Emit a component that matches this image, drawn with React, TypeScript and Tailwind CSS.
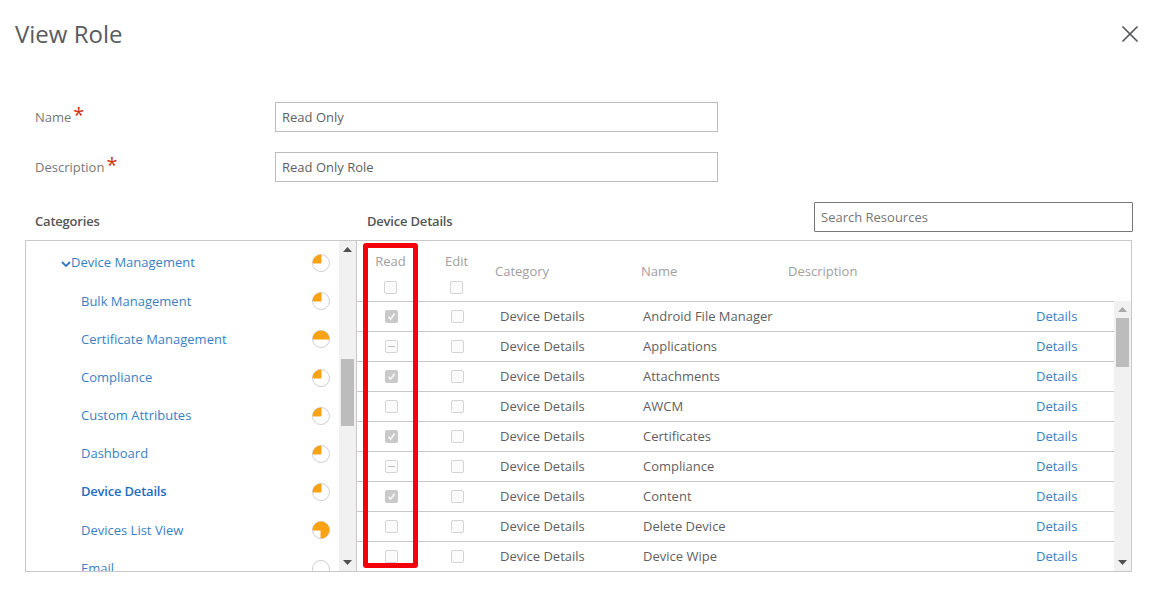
import { X } from "lucide-react";

const font = "font-['Open_Sans','Noto_Sans',sans-serif]";

type Share = "quarter" | "half" | "three" | "none";

const categories: { label: string; share: Share; bold?: boolean; parent?: boolean }[] = [
  { label: "Device Management", share: "quarter", parent: true },
  { label: "Bulk Management", share: "quarter" },
  { label: "Certificate Management", share: "half" },
  { label: "Compliance", share: "quarter" },
  { label: "Custom Attributes", share: "quarter" },
  { label: "Dashboard", share: "quarter" },
  { label: "Device Details", share: "quarter", bold: true },
  { label: "Devices List View", share: "three" },
  { label: "Email", share: "none" },
];

type Mark = "checked" | "mixed" | "empty";

const resources: { name: string; read: Mark }[] = [
  { name: "Android File Manager", read: "checked" },
  { name: "Applications", read: "mixed" },
  { name: "Attachments", read: "checked" },
  { name: "AWCM", read: "empty" },
  { name: "Certificates", read: "checked" },
  { name: "Compliance", read: "mixed" },
  { name: "Content", read: "checked" },
  { name: "Delete Device", read: "empty" },
  { name: "Device Wipe", read: "empty" },
];

const wedges: Record<Share, string> = {
  quarter: "M9 9V1A8 8 0 0 0 1 9Z",
  half: "M1 9A8 8 0 0 1 17 9Z",
  three: "M9 9H1A8 8 0 1 1 9 17Z",
  none: "",
};

function Pie({ share }: { share: Share }) {
  return (
    <svg width="18" height="18" viewBox="0 0 18 18" className="shrink-0">
      <circle cx="9" cy="9" r="8.5" fill="#fff" stroke="#cfcfcf" />
      {wedges[share] && <path d={wedges[share]} fill="#f9a213" stroke="#f9a213" strokeWidth="1" />}
    </svg>
  );
}

function Box({ mark = "empty" }: { mark?: Mark }) {
  if (mark === "checked") {
    return (
      <span className="flex h-[13px] w-[13px] items-center justify-center rounded-[2px] bg-[#c9c9c9]">
        <svg width="9" height="9" viewBox="0 0 9 9">
          <path d="M1.5 4.8 3.6 7 7.6 1.8" fill="none" stroke="#f4f4f4" strokeWidth="1.8" />
        </svg>
      </span>
    );
  }
  return (
    <span className="flex h-[13px] w-[13px] items-center justify-center rounded-[2px] border border-[#d4d4d4] bg-[#fbfbfb]">
      {mark === "mixed" && <span className="h-px w-[7px] bg-[#bdbdbd]" />}
    </span>
  );
}

function Arrow({ up, color }: { up?: boolean; color: string }) {
  return (
    <svg width="9" height="5" viewBox="0 0 9 5">
      <path d={up ? "M4.5 0 9 5H0Z" : "M0 0H9L4.5 5Z"} fill={color} />
    </svg>
  );
}

function Field({ label, value }: { label: string; value: string }) {
  return (
    <div className="flex h-[30px] items-center">
      <div className="flex w-[240px] items-center pt-px text-[13px] text-[#787878]">
        {label}
        <span className="ml-[2px] -mt-[5px] text-[20px] leading-none text-[#c9350f]">*</span>
      </div>
      <input
        readOnly
        value={value}
        className="h-[30px] w-[443px] border border-[#bcbcbc] px-[6px] text-[13px] text-[#5f5f5f] outline-none"
      />
    </div>
  );
}

export default function App() {
  return (
    <div className={`${font} relative h-[615px] w-[1160px] overflow-hidden bg-white`}>
      <div className="flex h-[68px] items-center justify-between pl-[15px] pr-4">
        <h1 className="text-[24px] text-[#5a5b5d]">View Role</h1>
        <X size={28} strokeWidth={1.5} className="text-[#58595b]" />
      </div>

      <div className="flex flex-col gap-5 pl-[35px] pt-[34px]">
        <Field label="Name" value="Read Only" />
        <Field label="Description" value="Read Only Role" />
      </div>

      <div className="flex h-[58px] items-start pl-[35px] pt-5">
        <div className="w-[332px] pt-[10px] text-[13px] font-semibold leading-[18px] tracking-[-0.2px] text-[#555555]">
          Categories
        </div>
        <div className="w-[447px] pt-[10px] text-[13px] font-semibold leading-[18px] tracking-[-0.2px] text-[#555555]">
          Device Details
        </div>
        <input
          readOnly
          placeholder="Search Resources"
          className="h-[30px] w-[319px] rounded-[1px] border border-[#777777] px-[6px] text-[13px] outline-none placeholder:text-[#767676]"
        />
      </div>

      <div className="ml-[25px] flex h-[332px] w-[1107px]">
        <div className="flex w-[332px] shrink-0 border border-[#c8c8c8]">
          <div className="min-w-0 flex-1 overflow-hidden pt-[3px]">
            {categories.map((c) => (
              <div key={c.label} className="flex h-[38.2px] items-center pr-[9px]">
                <div
                  className={`flex flex-1 items-center text-[13px] ${
                    c.parent ? "pl-[35px]" : "pl-[55px]"
                  } ${c.bold ? "font-semibold tracking-[-0.2px] text-[#1f6dbf]" : "text-[#3a7fc4]"}`}
                >
                  {c.parent && (
                    <svg width="10" height="6" viewBox="0 0 10 6" className="mt-[2px]">
                      <path d="M1 1 5 5 9 1" fill="none" stroke="#2f78c4" strokeWidth="1.8" />
                    </svg>
                  )}
                  {c.label}
                </div>
                <Pie share={c.share} />
              </div>
            ))}
          </div>
          <div className="flex w-[17px] shrink-0 flex-col items-center bg-[#f1f1f1]">
            <div className="flex h-[17px] items-center">
              <Arrow up color="#505050" />
            </div>
            <div className="mt-[101px] h-[67px] w-[13px] bg-[#bcbcbc]" />
            <div className="mt-auto flex h-[17px] items-center">
              <Arrow color="#505050" />
            </div>
          </div>
        </div>

        <div className="flex min-w-0 flex-1 flex-col border-y border-r border-[#c8c8c8]">
          <div className="flex h-[60px] shrink-0 text-[13px] text-[#a0a0a0]">
            <div className="flex w-[67px] flex-col items-center pt-[11px]">
              <span className="leading-[18px]">Read</span>
              <span className="mt-[11px] -ml-[1px]">
                <Box />
              </span>
            </div>
            <div className="flex w-[65px] flex-col items-center pt-[11px]">
              <span className="leading-[18px]">Edit</span>
              <span className="mt-[11px]">
                <Box />
              </span>
            </div>
            <div className="w-[152px] pl-[6px] pt-[21px] leading-[18px]">Category</div>
            <div className="w-[147px] pt-[21px] leading-[18px]">Name</div>
            <div className="pt-[21px] leading-[18px]">Description</div>
          </div>

          <div className="flex min-h-0 flex-1">
            <div className="min-w-0 flex-1 overflow-hidden">
              {resources.map((r) => (
                <div
                  key={r.name}
                  className="flex h-[30px] items-center border-t border-[#c8c8c8] text-[13px] text-[#5f5f5f]"
                >
                  <div className="flex w-[68px] justify-center">
                    <Box mark={r.read} />
                  </div>
                  <div className="flex w-[64px] justify-center">
                    <Box />
                  </div>
                  <div className="w-[154px] pl-[11px]">Device Details</div>
                  <div className="w-[393px]">{r.name}</div>
                  <div className="text-[#3a7fc4]">Details</div>
                </div>
              ))}
            </div>
            <div className="flex w-[17px] shrink-0 flex-col items-center bg-[#f1f1f1]">
              <div className="flex h-[17px] items-center">
                <Arrow up color="#a8a8a8" />
              </div>
              <div className="h-[49px] w-[13px] bg-[#bcbcbc]" />
              <div className="mt-auto flex h-[17px] items-center">
                <Arrow color="#505050" />
              </div>
            </div>
          </div>
        </div>
      </div>

      {/* highlight drawn on top of the Read column */}
      <div className="absolute left-[363px] top-[243px] h-[325px] w-[55px] rounded-[3px] border-[5px] border-[#f40009]" />
    </div>
  );
}
